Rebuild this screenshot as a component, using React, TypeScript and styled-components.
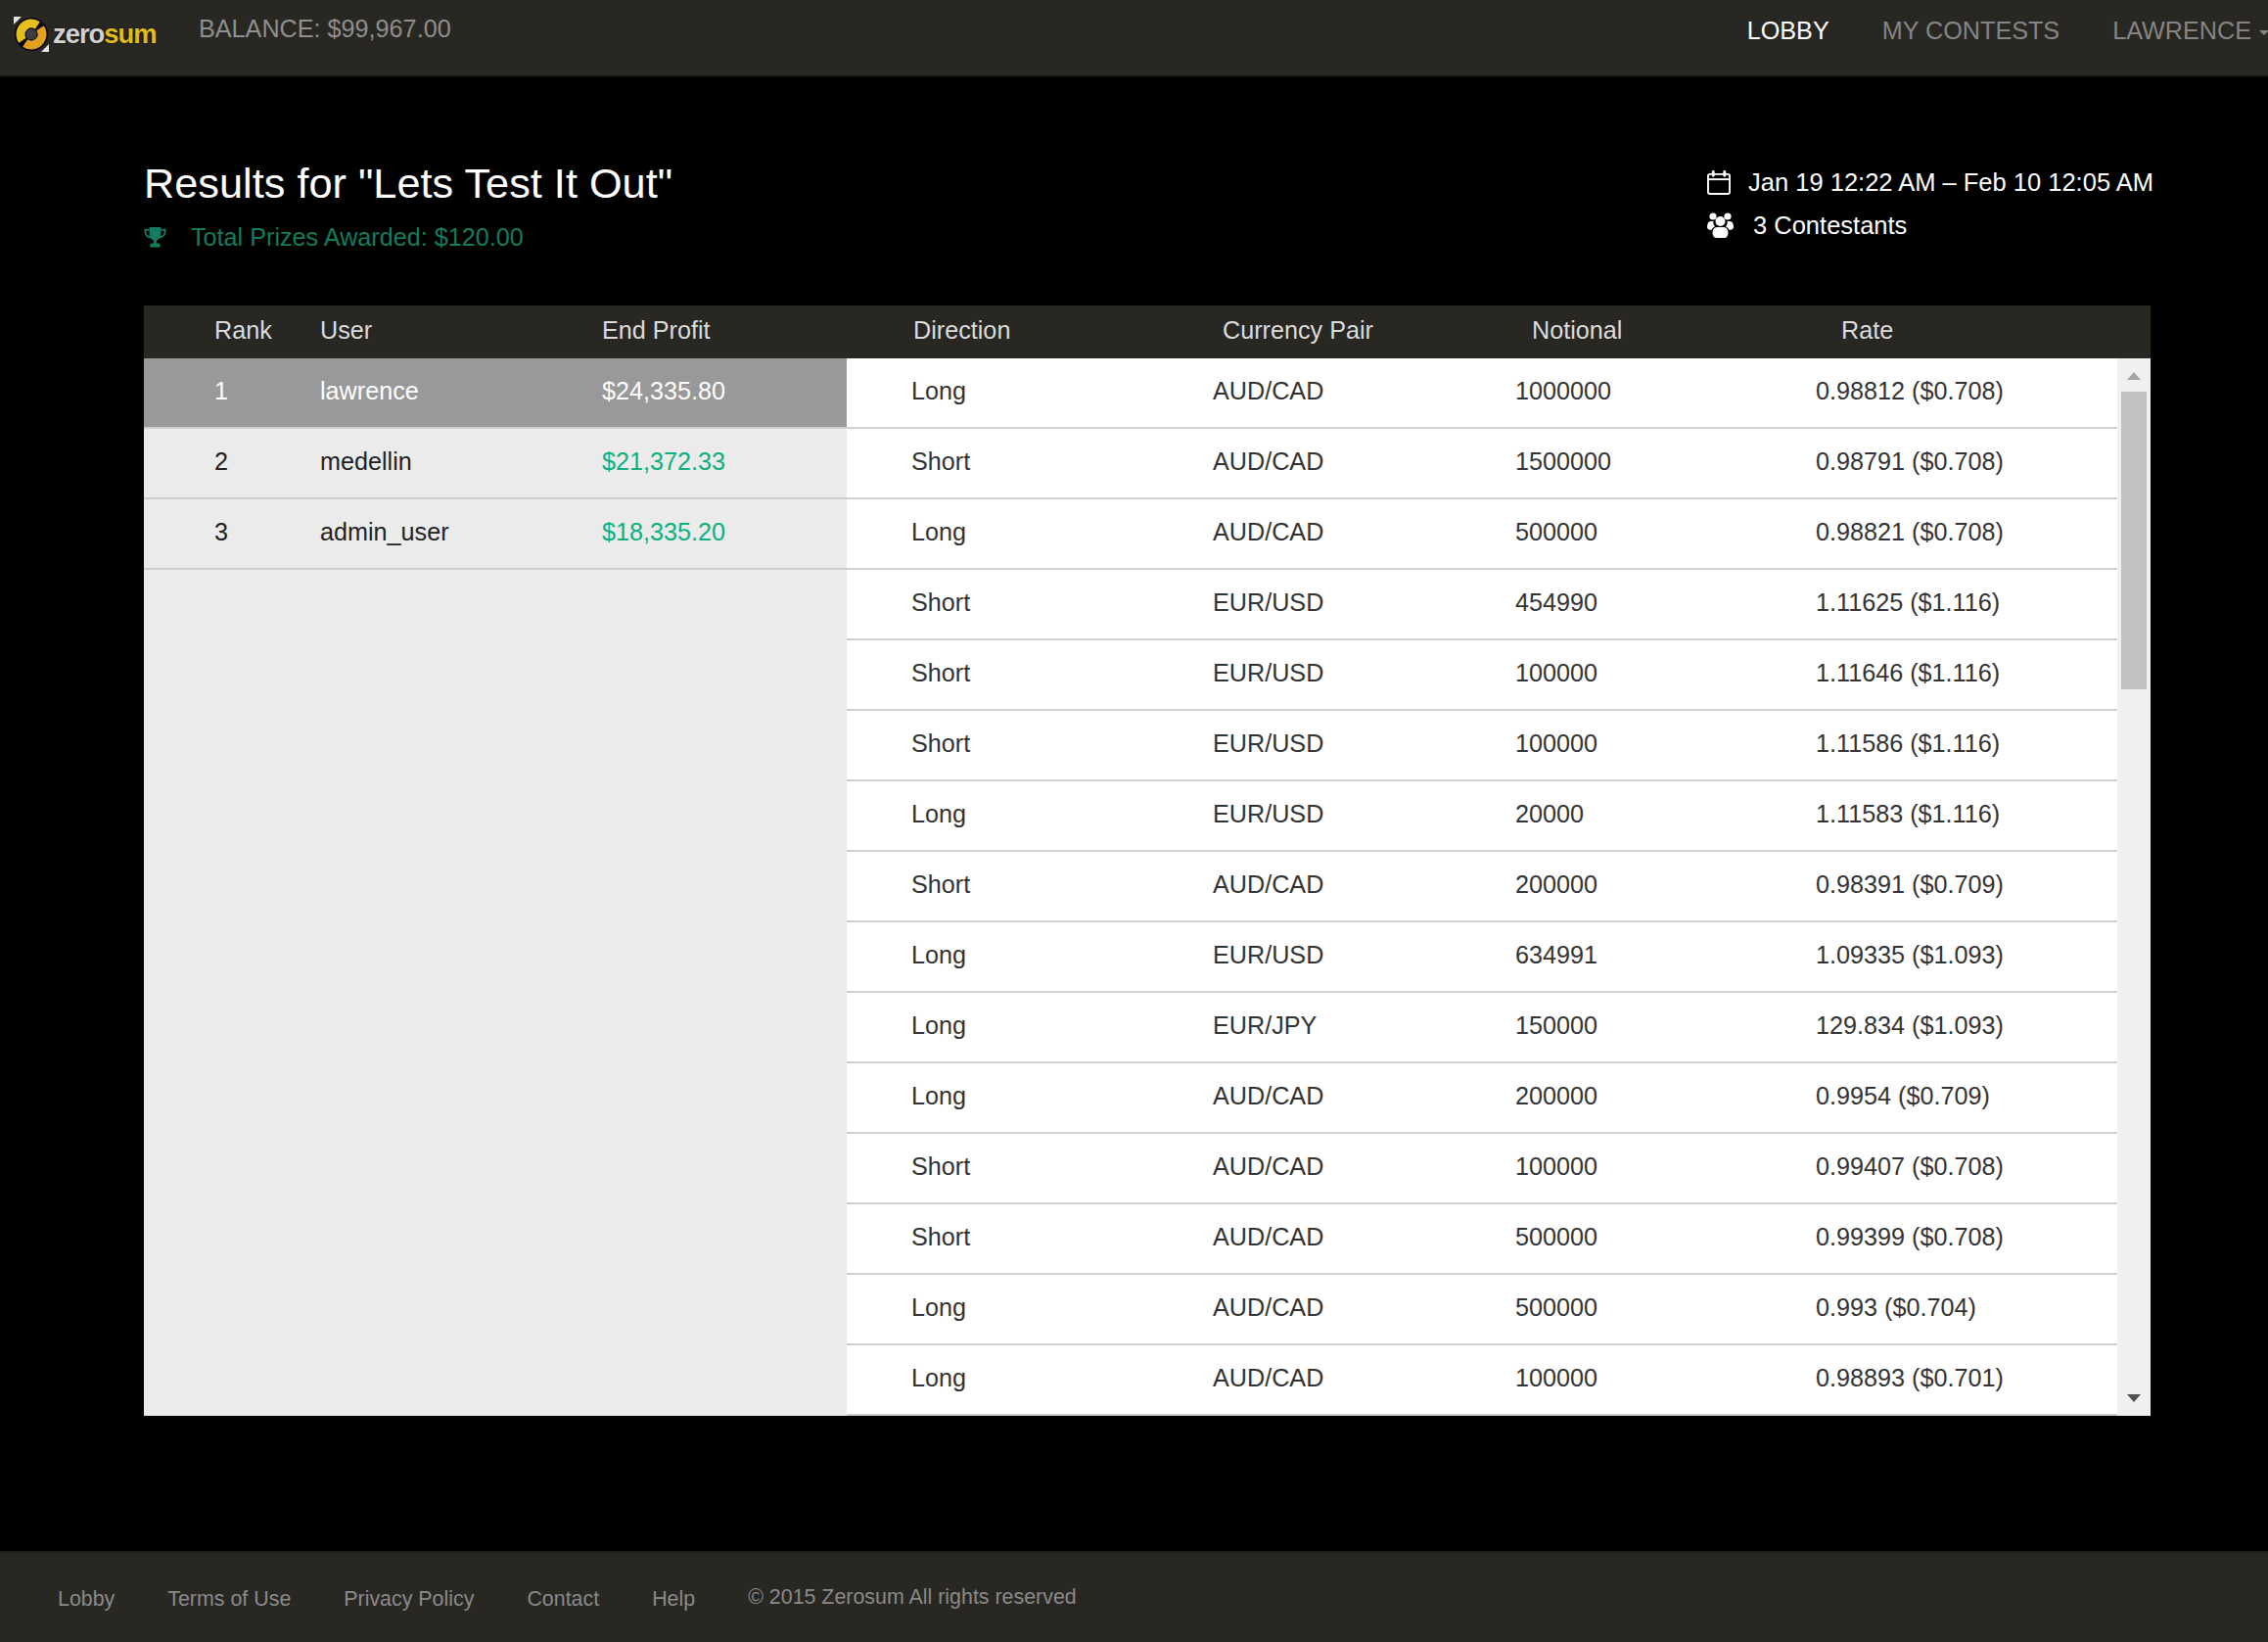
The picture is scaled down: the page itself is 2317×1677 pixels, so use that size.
import React from 'react';
import styled, { createGlobalStyle } from 'styled-components';

const GlobalStyle = createGlobalStyle`
  html, body {
    margin: 0;
    padding: 0;
    background: #000;
    font-family: "Liberation Sans", Arial, sans-serif;
  }
`;

const Page = styled.div`
  width: 2317px;
  height: 1677px;
  display: flex;
  flex-direction: column;
  overflow: hidden;
`;

const TopBar = styled.header`
  height: 76px;
  flex: none;
  background: #282722;
  border-bottom: 2px solid #1f1f1b;
  display: flex;
  justify-content: space-between;
  overflow: hidden;
`;

const TopLeft = styled.div`
  display: flex;
  padding-left: 13px;
`;

const Logo = styled.div`
  display: flex;
  align-items: center;
  gap: 3px;
  height: 69px;
  width: 190px;
`;

const LogoText = styled.span`
  font-size: 27.4px;
  font-weight: 700;
  letter-spacing: -1px;
  color: #d2d2ce;
  text-shadow: 0 0 2px #06061c;
  b {
    color: #e3bb1c;
  }
`;

const Balance = styled.div`
  font-size: 25.2px;
  line-height: 58px;
  color: #8f8f8f;
`;

const Nav = styled.nav`
  flex: none;
  display: flex;
  gap: 54px;
  margin-right: -1px;
`;

const NavLink = styled.a<{ $active?: boolean }>`
  font-size: 25.2px;
  line-height: 62px;
  white-space: nowrap;
  color: ${(p) => (p.$active ? '#fff' : '#858585')};
`;

const Caret = styled.span`
  display: inline-block;
  margin-left: 8px;
  vertical-align: middle;
  border-top: 5px solid #858585;
  border-left: 5px solid transparent;
  border-right: 5px solid transparent;
`;

const Main = styled.main`
  flex: 1;
  padding: 86px 120px 0 147px;
`;

const SummaryRow = styled.div`
  display: flex;
  justify-content: space-between;
  height: 148px;
`;

const Title = styled.h1`
  margin: 0;
  font-size: 43.3px;
  font-weight: 400;
  line-height: 47px;
  color: #fff;
`;

const Prizes = styled.div`
  display: flex;
  align-items: center;
  gap: 25px;
  margin-top: 15px;
  font-size: 25.2px;
  line-height: 32px;
  color: #137b5f;
`;

const Meta = styled.div`
  flex: none;
  width: 456px;
  margin-right: -3px;
  padding-top: 1px;
  font-size: 25.5px;
  white-space: nowrap;
  color: #fff;
`;

const MetaRow = styled.div<{ $gap: number }>`
  display: flex;
  align-items: center;
  gap: ${(p) => p.$gap}px;
  height: 43.5px;
`;

const Table = styled.section`
  width: 2050px;
`;

const HeadRow = styled.div`
  height: 54px;
  box-sizing: border-box;
  padding-bottom: 3px;
  background: #282722;
  display: flex;
  align-items: center;
  font-size: 25.2px;
  color: #dcdcdc;
`;

const LeftHead = styled.div`
  width: 718px;
  display: grid;
  grid-template-columns: 72px 108px 288px 1fr;
`;

const RightHead = styled.div`
  flex: 1;
  display: grid;
  grid-template-columns: 68px 316px 316px 316px 1fr;
`;

const Body = styled.div`
  display: flex;
  height: 1080px;
`;

const LeftPanel = styled.div`
  width: 718px;
  background: #ebebeb;
`;

const RightPanel = styled.div`
  flex: 1;
  background: #fff;
`;

const LeftRow = styled.div<{ $winner?: boolean }>`
  height: 72px;
  box-sizing: border-box;
  padding-bottom: 3px;
  display: grid;
  grid-template-columns: 72px 108px 288px 1fr;
  align-items: center;
  border-bottom: 2px solid #cfcfcf;
  font-size: 25.2px;
  background: ${(p) => (p.$winner ? '#999' : 'transparent')};
  color: ${(p) => (p.$winner ? '#fff' : '#222')};
`;

const Profit = styled.span<{ $winner?: boolean }>`
  color: ${(p) => (p.$winner ? '#fff' : '#0cb07f')};
`;

const TradeRow = styled.div`
  height: 72px;
  box-sizing: border-box;
  padding-bottom: 3px;
  display: grid;
  grid-template-columns: 66px 308px 309px 307px 1fr;
  align-items: center;
  border-bottom: 2px solid #cfcfcf;
  font-size: 25.2px;
  color: #333;
`;

const Scrollbar = styled.div`
  width: 34px;
  background: #f0f0f0;
  display: flex;
  flex-direction: column;
  align-items: center;
  padding-top: 14px;
  box-sizing: border-box;
`;

const ArrowUp = styled.div`
  border-bottom: 8px solid #a3a3a3;
  border-left: 7px solid transparent;
  border-right: 7px solid transparent;
`;

const Thumb = styled.div`
  width: 26px;
  height: 304px;
  margin-top: 12px;
  background: #c1c1c1;
`;

const ArrowDown = styled.div`
  margin-top: auto;
  margin-bottom: 14px;
  border-top: 8px solid #505050;
  border-left: 7px solid transparent;
  border-right: 7px solid transparent;
`;

const Footer = styled.footer`
  height: 93px;
  flex: none;
  box-sizing: border-box;
  background: #282722;
  border-top: 2px solid #1f1f1b;
  display: flex;
  align-items: center;
  gap: 54px;
  padding: 4px 0 0 59px;
  font-size: 21.4px;
  color: #8a8a8a;
`;

const Copyright = styled.span`
  margin-top: -4px;
`;

const CalendarIcon = () => (
  <svg width="25" height="25" viewBox="0 0 25 26" fill="none" stroke="#fff" strokeWidth="2">
    <rect x="1" y="4" width="23" height="21" rx="2" />
    <path d="M1 9.500h23" />
    <path d="M6.500 1.500v4M18.500 1.500v4" strokeWidth="3" strokeLinecap="round" />
  </svg>
);

const UsersIcon = () => (
  <svg width="27" height="26" viewBox="0 0 27 26" fill="#fff">
    <circle cx="6" cy="4" r="3.600" />
    <circle cx="21" cy="4" r="3.600" />
    <path d="M0 15c0-4 1.500-6 3.500-6h3c-.6 2 .2 4 1.500 5.500-1.500.5-2.800 1.500-3.300 3.300C2 18 0 17 0 15z" />
    <path d="M27 15c0-4-1.500-6-3.500-6h-3c.6 2-.2 4-1.500 5.500 1.500.5 2.800 1.500 3.300 3.300C25 18 27 17 27 15z" />
    <circle cx="13.500" cy="9" r="5" />
    <path d="M5.500 21c0-3 1.500-6 4.500-6h7c3 0 4.500 3 4.500 6 0 3-2 5-4 5H9.500c-2 0-4-2-4-5z" />
  </svg>
);

const TrophyIcon = () => (
  <svg width="23" height="21" viewBox="0 0 25 23" fill="#137b5f">
    <path d="M6 0h13v8c0 3.500-2.500 6-5 7v3h3l1 3H7l1-3h3v-3c-2.500-1-5-3.500-5-7z" />
    <path d="M7 19h11v3.500H7z" />
    <path
      d="M6 3H1.500v2.500C1.500 8.500 4 11 8 11.500M19 3h4.500v2.500c0 3-2.500 5.500-6.500 6"
      fill="none"
      stroke="#137b5f"
      strokeWidth="2"
    />
  </svg>
);

const LogoMark = () => (
  <svg width="38" height="38" viewBox="0 0 38 38" fill="none">
    <path d="M1 1h8L1 9zM37 37h-8l8-8z" fill="#e4e4e4" />
    <circle cx="19" cy="19" r="17" fill="#06061c" />
    <path d="M10 25.300A11 11 0 0 1 25.300 10" stroke="#e8bf1a" strokeWidth="9" />
    <path d="M28 12.700A11 11 0 0 1 12.700 28" stroke="#e39f1f" strokeWidth="9" />
    <circle cx="19" cy="19" r="5.500" fill="#3e3e3a" />
  </svg>
);

const leaders = [
  { rank: 1, user: 'lawrence', profit: '$24,335.80', winner: true },
  { rank: 2, user: 'medellin', profit: '$21,372.33' },
  { rank: 3, user: 'admin_user', profit: '$18,335.20' },
];

const trades = [
  ['Long', 'AUD/CAD', '1000000', '0.98812 ($0.708)'],
  ['Short', 'AUD/CAD', '1500000', '0.98791 ($0.708)'],
  ['Long', 'AUD/CAD', '500000', '0.98821 ($0.708)'],
  ['Short', 'EUR/USD', '454990', '1.11625 ($1.116)'],
  ['Short', 'EUR/USD', '100000', '1.11646 ($1.116)'],
  ['Short', 'EUR/USD', '100000', '1.11586 ($1.116)'],
  ['Long', 'EUR/USD', '20000', '1.11583 ($1.116)'],
  ['Short', 'AUD/CAD', '200000', '0.98391 ($0.709)'],
  ['Long', 'EUR/USD', '634991', '1.09335 ($1.093)'],
  ['Long', 'EUR/JPY', '150000', '129.834 ($1.093)'],
  ['Long', 'AUD/CAD', '200000', '0.9954 ($0.709)'],
  ['Short', 'AUD/CAD', '100000', '0.99407 ($0.708)'],
  ['Short', 'AUD/CAD', '500000', '0.99399 ($0.708)'],
  ['Long', 'AUD/CAD', '500000', '0.993 ($0.704)'],
  ['Long', 'AUD/CAD', '100000', '0.98893 ($0.701)'],
];

function App() {
  return (
    <Page>
      <GlobalStyle />
      <TopBar>
        <TopLeft>
          <Logo>
            <LogoMark />
            <LogoText>
              zero<b>sum</b>
            </LogoText>
          </Logo>
          <Balance>BALANCE: $99,967.00</Balance>
        </TopLeft>
        <Nav>
          <NavLink $active>LOBBY</NavLink>
          <NavLink>MY CONTESTS</NavLink>
          <NavLink>
            LAWRENCE
            <Caret />
          </NavLink>
        </Nav>
      </TopBar>
      <Main>
        <SummaryRow>
          <div>
            <Title>Results for "Lets Test It Out"</Title>
            <Prizes>
              <TrophyIcon />
              Total Prizes Awarded: $120.00
            </Prizes>
          </div>
          <Meta>
            <MetaRow $gap={18}>
              <CalendarIcon />
              Jan 19 12:22 AM – Feb 10 12:05 AM
            </MetaRow>
            <MetaRow $gap={20}>
              <UsersIcon />
              3 Contestants
            </MetaRow>
          </Meta>
        </SummaryRow>
        <Table>
          <HeadRow>
            <LeftHead>
              <span />
              <span>Rank</span>
              <span>User</span>
              <span>End Profit</span>
            </LeftHead>
            <RightHead>
              <span />
              <span>Direction</span>
              <span>Currency Pair</span>
              <span>Notional</span>
              <span>Rate</span>
            </RightHead>
          </HeadRow>
          <Body>
            <LeftPanel>
              {leaders.map((l) => (
                <LeftRow key={l.rank} $winner={l.winner}>
                  <span />
                  <span>{l.rank}</span>
                  <span>{l.user}</span>
                  <Profit $winner={l.winner}>{l.profit}</Profit>
                </LeftRow>
              ))}
            </LeftPanel>
            <RightPanel>
              {trades.map((t, i) => (
                <TradeRow key={i}>
                  <span />
                  <span>{t[0]}</span>
                  <span>{t[1]}</span>
                  <span>{t[2]}</span>
                  <span>{t[3]}</span>
                </TradeRow>
              ))}
            </RightPanel>
            <Scrollbar>
              <ArrowUp />
              <Thumb />
              <ArrowDown />
            </Scrollbar>
          </Body>
        </Table>
      </Main>
      <Footer>
        <span>Lobby</span>
        <span>Terms of Use</span>
        <span>Privacy Policy</span>
        <span>Contact</span>
        <span>Help</span>
        <Copyright>© 2015 Zerosum All rights reserved</Copyright>
      </Footer>
    </Page>
  );
}

export default App;
